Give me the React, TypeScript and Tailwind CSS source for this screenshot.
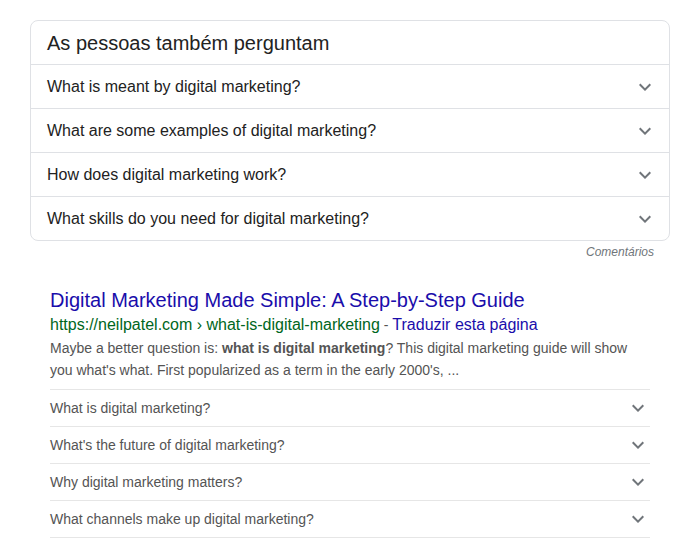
function Chevron() {
  return (
    <svg width="24" height="24" viewBox="0 0 24 24" className="shrink-0">
      <path
        d="M7.41 8.59L12 13.17l4.59-4.58L18 10l-6 6-6-6 1.41-1.41z"
        fill="#70757a"
      />
    </svg>
  );
}

const questions = [
  "What is meant by digital marketing?",
  "What are some examples of digital marketing?",
  "How does digital marketing work?",
  "What skills do you need for digital marketing?",
];

const subQuestions = [
  "What is digital marketing?",
  "What's the future of digital marketing?",
  "Why digital marketing matters?",
  "What channels make up digital marketing?",
];

export default function App() {
  return (
    <div
      className="w-[693px] h-[555px] bg-white overflow-hidden"
      style={{ fontFamily: '"Liberation Sans", Arial, sans-serif' }}
    >
      <div className="ml-[30px] pt-[20px] w-[640px]">
        {/* people also ask */}
        <div className="border border-[#dfe1e5] rounded-lg">
          <div className="h-[43px] flex items-center pl-[16px] text-[20px] text-[#222]">
            As pessoas também perguntam
          </div>
          {questions.map((q) => (
            <div
              key={q}
              className="h-[44px] border-t border-[#dfe1e5] flex items-center justify-between pl-[16px] pr-[12px] text-[16px] text-[#222]"
            >
              <span>{q}</span>
              <Chevron />
            </div>
          ))}
        </div>
        <div className="flex justify-end pr-[16px] mt-[3px]">
          <span className="text-[12px] italic text-[#70757a] leading-[16px]">
            Comentários
          </span>
        </div>

        {/* result */}
        <div className="pl-[20px] pr-[20px] mt-[27px]">
          <a href="#" className="block text-[20px] leading-[26px] text-[#1a0dab]">
            Digital Marketing Made Simple: A Step-by-Step Guide
          </a>
          <div className="text-[16px] leading-[24px]">
            <span className="text-[#006621]">
              https://neilpatel.com › what-is-digital-marketing
            </span>
            <span className="text-[#545454] text-[14px]"> - </span>
            <a href="#" className="text-[#1a0dab]">
              Traduzir esta página
            </a>
          </div>
          <div className="text-[14px] leading-[22px] text-[#545454]">
            Maybe a better question is: <b>what is digital marketing</b>? This
            digital marketing guide will show you what's what. First
            popularized as a term in the early 2000's, ...
          </div>
          <div className="mt-[8px] border-b border-[#e6e6e6]">
            {subQuestions.map((q) => (
              <div
                key={q}
                className="h-[37px] border-t border-[#e6e6e6] flex items-center justify-between text-[14px] text-[#545454]"
              >
                <span>{q}</span>
                <Chevron />
              </div>
            ))}
          </div>
        </div>
      </div>
    </div>
  );
}
